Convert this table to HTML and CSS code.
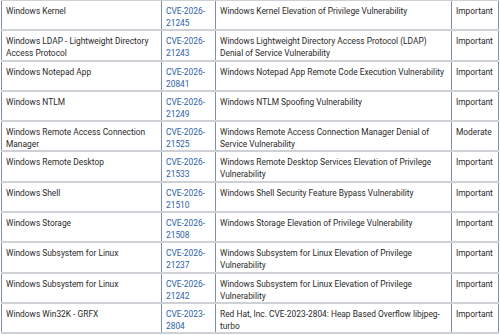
FILE: index.html
```html
<!DOCTYPE html>
<html>
<head>
<meta charset="utf-8">
<link rel="stylesheet" href="styles.css">
</head>
<body>
<table class="cve-table">
  <colgroup>
    <col class="c-prod"><col class="c-cve"><col class="c-title"><col class="c-sev">
  </colgroup>
  <tbody>
    <tr><td>Windows Kernel</td><td><a href="#">CVE-2026-21245</a></td><td>Windows Kernel Elevation of Privilege Vulnerability</td><td>Important</td></tr>
    <tr><td>Windows LDAP - Lightweight Directory Access Protocol</td><td><a href="#">CVE-2026-21243</a></td><td>Windows Lightweight Directory Access Protocol (LDAP) Denial of Service Vulnerability</td><td>Important</td></tr>
    <tr><td>Windows Notepad App</td><td><a href="#">CVE-2026-20841</a></td><td>Windows Notepad App Remote Code Execution Vulnerability</td><td>Important</td></tr>
    <tr><td>Windows NTLM</td><td><a href="#">CVE-2026-21249</a></td><td>Windows NTLM Spoofing Vulnerability</td><td>Important</td></tr>
    <tr><td>Windows Remote Access Connection Manager</td><td><a href="#">CVE-2026-21525</a></td><td>Windows Remote Access Connection Manager Denial of Service Vulnerability</td><td>Moderate</td></tr>
    <tr><td>Windows Remote Desktop</td><td><a href="#">CVE-2026-21533</a></td><td>Windows Remote Desktop Services Elevation of Privilege Vulnerability</td><td>Important</td></tr>
    <tr><td>Windows Shell</td><td><a href="#">CVE-2026-21510</a></td><td>Windows Shell Security Feature Bypass Vulnerability</td><td>Important</td></tr>
    <tr><td>Windows Storage</td><td><a href="#">CVE-2026-21508</a></td><td>Windows Storage Elevation of Privilege Vulnerability</td><td>Important</td></tr>
    <tr><td>Windows Subsystem for Linux</td><td><a href="#">CVE-2026-21237</a></td><td>Windows Subsystem for Linux Elevation of Privilege Vulnerability</td><td>Important</td></tr>
    <tr><td>Windows Subsystem for Linux</td><td><a href="#">CVE-2026-21242</a></td><td>Windows Subsystem for Linux Elevation of Privilege Vulnerability</td><td>Important</td></tr>
    <tr><td>Windows Win32K - GRFX</td><td><a href="#">CVE-2023-2804</a></td><td>Red Hat, Inc. CVE-2023-2804: Heap Based Overflow libjpeg-turbo</td><td>Important</td></tr>
  </tbody>
</table>
</body>
</html>
```
FILE: styles.css
```css
html, body {
  margin: 0;
  padding: 0;
  background: #ffffff;
}
body {
  padding: 0 0 0 1px;
}
.cve-table {
  border-collapse: collapse;
  table-layout: fixed;
  width: 497px;
  margin-top: -1px;
  font-family: Roboto, "Noto Sans", Arial, sans-serif;
  font-size: 8.4px;
  line-height: 12px;
  color: #2a2a2a;
}
.c-prod { width: 160px; }
.c-cve { width: 54px; }
.c-title { width: 236px; }
.c-sev { width: 47px; }
.cve-table td {
  vertical-align: top;
  padding: 4px 4px 0.3px 4px;
  border-left: 1px solid #7f8ea6;
  border-right: 1px solid #7f8ea6;
  border-top: 2px solid #cdd0d5;
  border-bottom: 2px solid #cdd0d5;
  word-wrap: break-word;
}
.cve-table a {
  color: #2b62a8;
  text-decoration: none;
}
```
